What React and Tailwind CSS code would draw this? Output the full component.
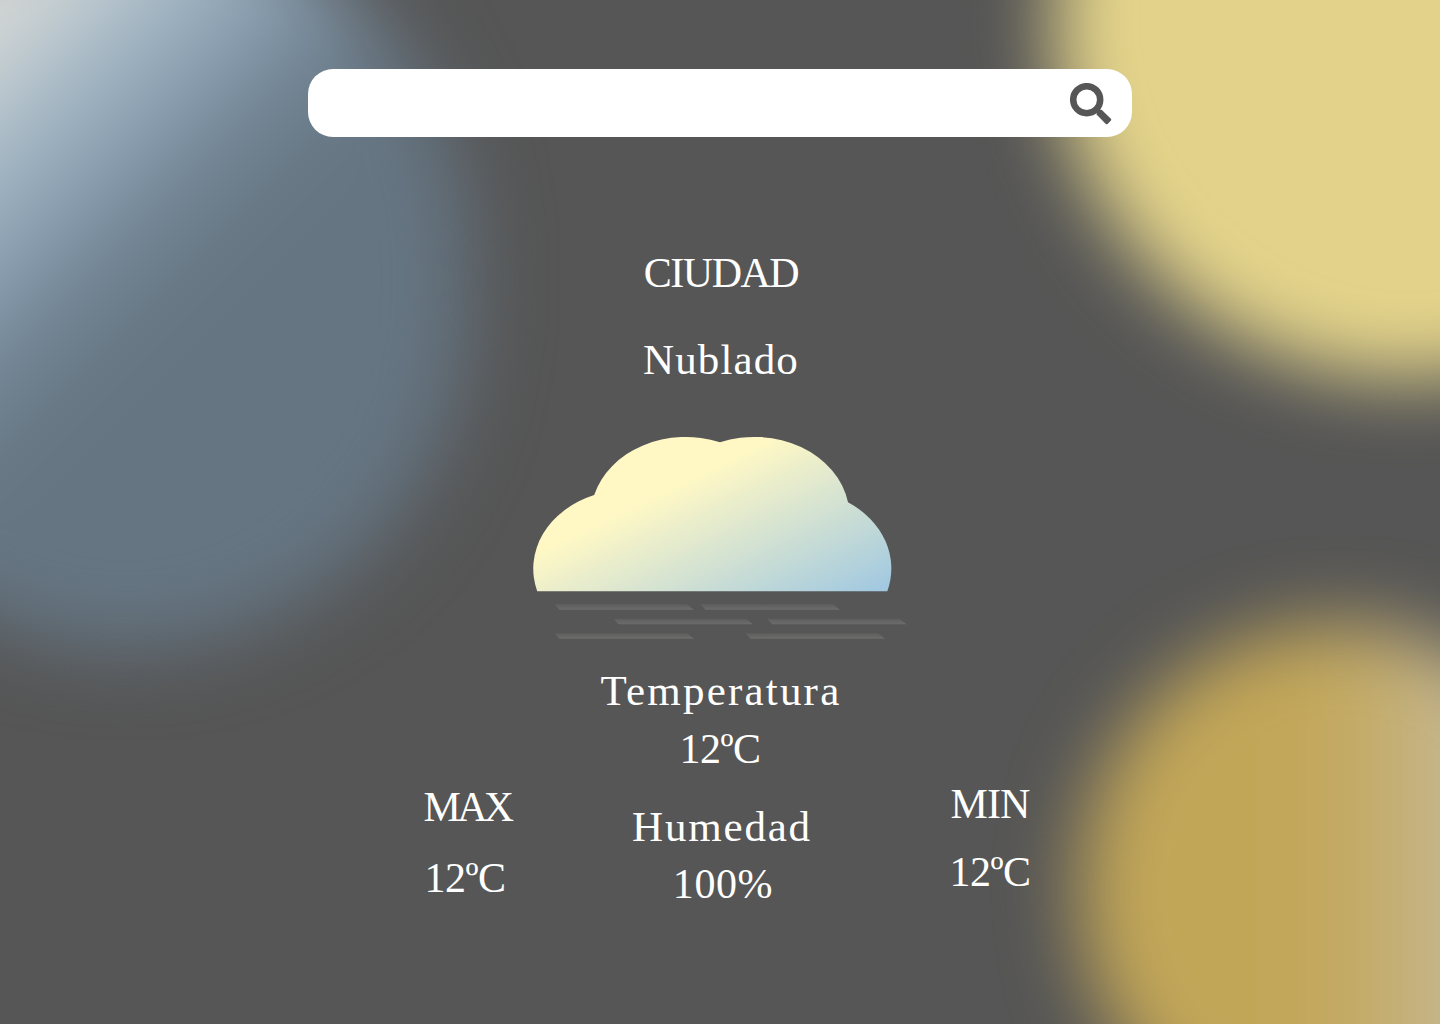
const STREAKS = [
  [22, 168],
  [81, 234.5],
  [22, 213],
];

function Backdrop() {
  return (
    <div className="absolute inset-0 overflow-hidden" aria-hidden="true">
      <div className="absolute left-[-216px] top-[-92px] h-[742px] w-[684px] rounded-full bg-[linear-gradient(135deg,#dcddd9_210px,#abbdc9_312px,#869bae_414px,#6e7f8d_496px,#657582_570px)] blur-[39px]" />
      <div className="absolute left-[1054px] top-[-331px] h-[710px] w-[710px] rounded-full bg-[#e3d38a] blur-[38px]" />
      <div className="absolute left-[1080px] top-[623px] h-[534px] w-[520px] rounded-full bg-[linear-gradient(90deg,#c2a658_220px,#c4ac6a_290px,#c5b486_360px,#c7bda8_430px)] blur-[38px]" />
    </div>
  );
}

function SearchIcon() {
  return (
    <svg className="h-[42px] w-[42px] translate-y-px" viewBox="0 0 42 42" fill="none" stroke="#565656">
      <circle cx="16.7" cy="16.7" r="13.5" strokeWidth="6.5" />
      <path
        d="M26.6 31.6v-2.8l2.1-2.1h2.9L40.9 35.8q.8.9 0 1.8l-3.3 3.3q-.9.8-1.8 0z"
        fill="#565656"
        stroke="none"
      />
      <path d="M26 26l4 4" strokeWidth="4" />
    </svg>
  );
}

function Cloud() {
  return (
    <svg className="h-[210px] w-[380px]" viewBox="0 0 380 210">
      <defs>
        <linearGradient id="sky" gradientUnits="userSpaceOnUse" x1="154" y1="44" x2="236" y2="212">
          <stop stopColor="#fff8c5" />
          <stop offset="1" stopColor="#a0c8e1" />
        </linearGradient>
        <linearGradient id="mist" x1="0" y1="0" x2="0" y2="1">
          <stop stopColor="#5f5f5f" />
          <stop offset="1" stopColor="#6c6c6b" />
        </linearGradient>
        <filter id="soft" x="-5%" y="-50%" width="110%" height="200%">
          <feGaussianBlur stdDeviation="0.6" />
        </filter>
      </defs>
      <path
        d="M4.2 155.3A95 79 0 0 1 61.2 59A95 79 0 0 1 187 6.3A95 79 0 0 1 315 66.2A95 79 0 0 1 354.3 155.3Z"
        fill="url(#sky)"
      />
      {STREAKS.map((row, i) =>
        row.map((x) => (
          <path
            key={`${i}-${x}`}
            transform={`translate(${x} ${168.3 + i * 14.5})`}
            d="M-0.5 0H132L139 5.5H4.5Z"
            fill="url(#mist)"
            filter="url(#soft)"
          />
        ))
      )}
    </svg>
  );
}

export default function App() {
  return (
    <div className="relative flex h-[1024px] w-[1440px] flex-col items-center overflow-hidden bg-[#565656] pt-[69px] font-['Liberation_Serif',serif] text-[43px] leading-[51px] text-white">
      <Backdrop />
      <label className="relative flex h-[68px] w-[824px] shrink-0 items-center rounded-[25px] bg-white pl-6 pr-[20px] text-[#565656]">
        <input className="h-full min-w-0 flex-1 bg-transparent outline-none" aria-label="Buscar ciudad" />
        <SearchIcon />
      </label>

      <main className="relative flex w-full flex-col items-center">
        <h1 className="mt-[111px] pl-[2px] text-[42px] tracking-[-1.5px]">CIUDAD</h1>
        <p className="mt-[35px] pl-[2px] tracking-[1.1px]">Nublado</p>
        <div className="mt-[51px] flex w-[380px] translate-x-[3px]">
          <Cloud />
        </div>

        <div className="mt-[19px] ml-3 grid w-[608px] grid-cols-[92px_1fr_82px]">
          <section className="flex flex-col items-center pt-[117px] text-[42px]">
            <h2 className="-translate-x-px tracking-[-3.6px]">MAX</h2>
            <p className="mt-5 -translate-x-[3px] tracking-[-0.5px]">12ºC</p>
          </section>
          <section className="flex flex-col items-center pr-5">
            <h2 className="tracking-[2.2px]">Temperatura</h2>
            <p className="mt-[8px] -translate-x-px text-[42px] tracking-[-0.5px]">12ºC</p>
            <h2 className="mt-[26px] translate-x-px tracking-[1.8px]">Humedad</h2>
            <p className="mt-[7px] translate-x-[2px] text-[42px] tracking-[0.6px]">100%</p>
          </section>
          <section className="flex translate-x-px flex-col items-center pt-[114px] text-[42px]">
            <h2 className="tracking-[-0.9px]">MIN</h2>
            <p className="mt-[17px] tracking-[-0.5px]">12ºC</p>
          </section>
        </div>
      </main>
    </div>
  );
}
